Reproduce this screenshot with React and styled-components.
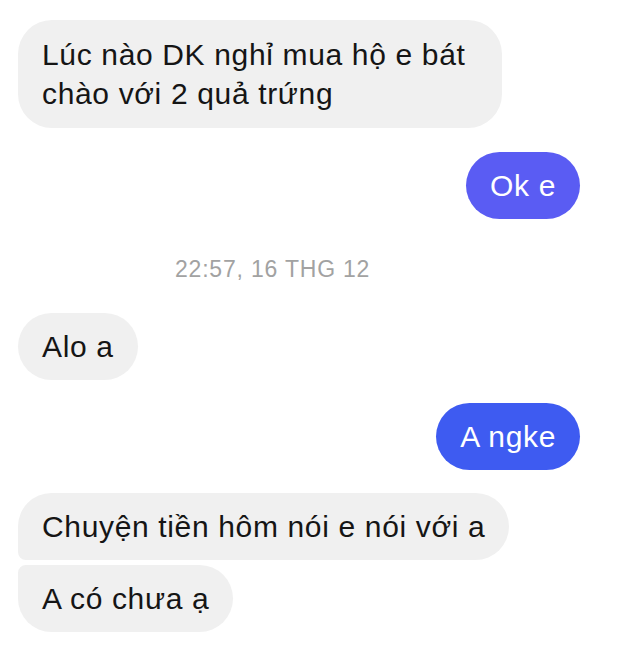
import React from 'react';
import styled, { createGlobalStyle } from 'styled-components';

const GlobalStyle = createGlobalStyle`
  html, body {
    margin: 0;
    padding: 0;
    background: #ffffff;
  }
  body {
    font-family: "Liberation Sans", Arial, sans-serif;
    -webkit-font-smoothing: antialiased;
  }
`;

const Thread = styled.div`
  width: 620px;
  height: 654px;
  box-sizing: border-box;
  padding: 20px 40px 0 18px;
  display: flex;
  flex-direction: column;
  background: #ffffff;
  overflow: hidden;
`;

const Row = styled.div`
  display: flex;
  justify-content: ${(p) => (p.$mine ? 'flex-end' : 'flex-start')};
  margin-top: ${(p) => p.$gap || 0}px;
`;

const bigR = 34;
const smallR = 8;

const radius = (p) => {
  if (p.$mine) return `${bigR}px`;
  if (p.$pos === 'first') return `${bigR}px ${bigR}px ${bigR}px ${smallR}px`;
  if (p.$pos === 'last') return `${smallR}px ${bigR}px ${bigR}px ${bigR}px`;
  return `${bigR}px`;
};

const Bubble = styled.div`
  box-sizing: border-box;
  max-width: ${(p) => (p.$tall ? '484px' : '520px')};
  white-space: ${(p) => (p.$tall ? 'normal' : 'nowrap')};
  padding: ${(p) => (p.$tall ? '15px' : '14px')} 24px;
  font-size: 30px;
  line-height: 39px;
  letter-spacing: 0.65px;
  color: ${(p) => (p.$mine ? '#ffffff' : '#151515')};
  background: ${(p) => (p.$mine ? p.$tint || '#4f5cf2' : '#f0f0f0')};
  border-radius: ${radius};
`;

const Stamp = styled.div`
  margin-top: 37px;
  margin-bottom: 31px;
  padding-left: 157px;
  font-size: 23px;
  line-height: 26px;
  letter-spacing: 0.8px;
  color: #a2a2a2;
`;

export default function App() {
  return (
    <>
      <GlobalStyle />
      <Thread>
        <Row>
          <Bubble $tall>Lúc nào DK nghỉ mua hộ e bát chào với 2 quả trứng</Bubble>
        </Row>
        <Row $mine $gap={24}>
          <Bubble $mine $tint="#5a5cf3">Ok e</Bubble>
        </Row>
        <Stamp>22:57, 16 THG 12</Stamp>
        <Row>
          <Bubble>Alo a</Bubble>
        </Row>
        <Row $mine $gap={23}>
          <Bubble $mine $tint="#3e5bf1">A ngke</Bubble>
        </Row>
        <Row $gap={23}>
          <Bubble $pos="first">Chuyện tiền hôm nói e nói với a</Bubble>
        </Row>
        <Row $gap={5}>
          <Bubble $pos="last">A có chưa ạ</Bubble>
        </Row>
      </Thread>
    </>
  );
}
